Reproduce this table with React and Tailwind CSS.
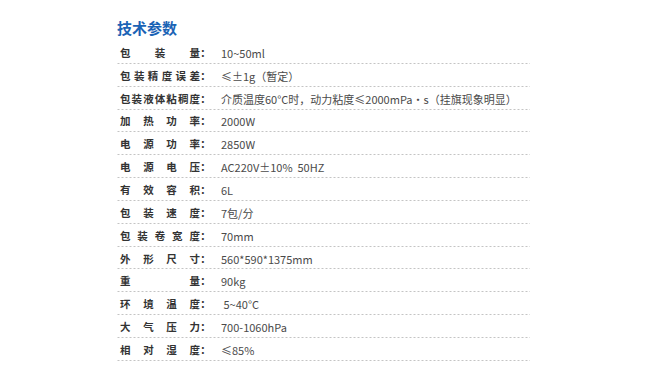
const rows = [
  ["包装量", "10~50ml"],
  ["包装精度误差", "≤±1g（暂定）"],
  ["包装液体粘稠度", "介质温度60°C时，动力粘度≤2000mPa·s（挂旗现象明显）"],
  ["加热功率", "2000W"],
  ["电源功率", "2850W"],
  ["电源电压", "AC220V±10%  50HZ"],
  ["有效容积", "6L"],
  ["包装速度", "7包/分"],
  ["包装卷宽度", "70mm"],
  ["外形尺寸", "560*590*1375mm"],
  ["重量", "90kg"],
  ["环境温度", " 5~40°C"],
  ["大气压力", "700-1060hPa"],
  ["相对湿度", "≤85%"],
];

export default function App() {
  return (
    <div
      className="w-[650px] h-[365px] overflow-hidden bg-white pl-[117px] pt-[18px]"
      style={{ fontFamily: '"Noto Sans CJK SC", "Noto Sans", sans-serif' }}
    >
      <h2 className="text-[15px] leading-[20px] font-bold text-[#1b63b5] mb-[3px]">技术参数</h2>
      <div className="w-[413px]">
        {rows.map(([k, v]) => (
          <div
            key={k}
            className="flex items-center h-[22.85px] pt-[1px] bg-[linear-gradient(to_right,#c4c4c4_50%,transparent_50%)] bg-[length:4px_1px] bg-repeat-x bg-bottom"
          >
            <div className="w-[80px] ml-[3px] shrink-0 text-[10.5px] font-bold text-[#333] text-justify [text-align-last:justify] whitespace-nowrap leading-[14px]">
              {k}
            </div>
            <div className="w-[11px] shrink-0 text-[10.5px] font-bold text-[#333] leading-[14px] text-center">：</div>
            <div className="ml-[10px] text-[11px] text-[#4a4a4a] whitespace-pre leading-[14px]">{v}</div>
          </div>
        ))}
      </div>
    </div>
  );
}
